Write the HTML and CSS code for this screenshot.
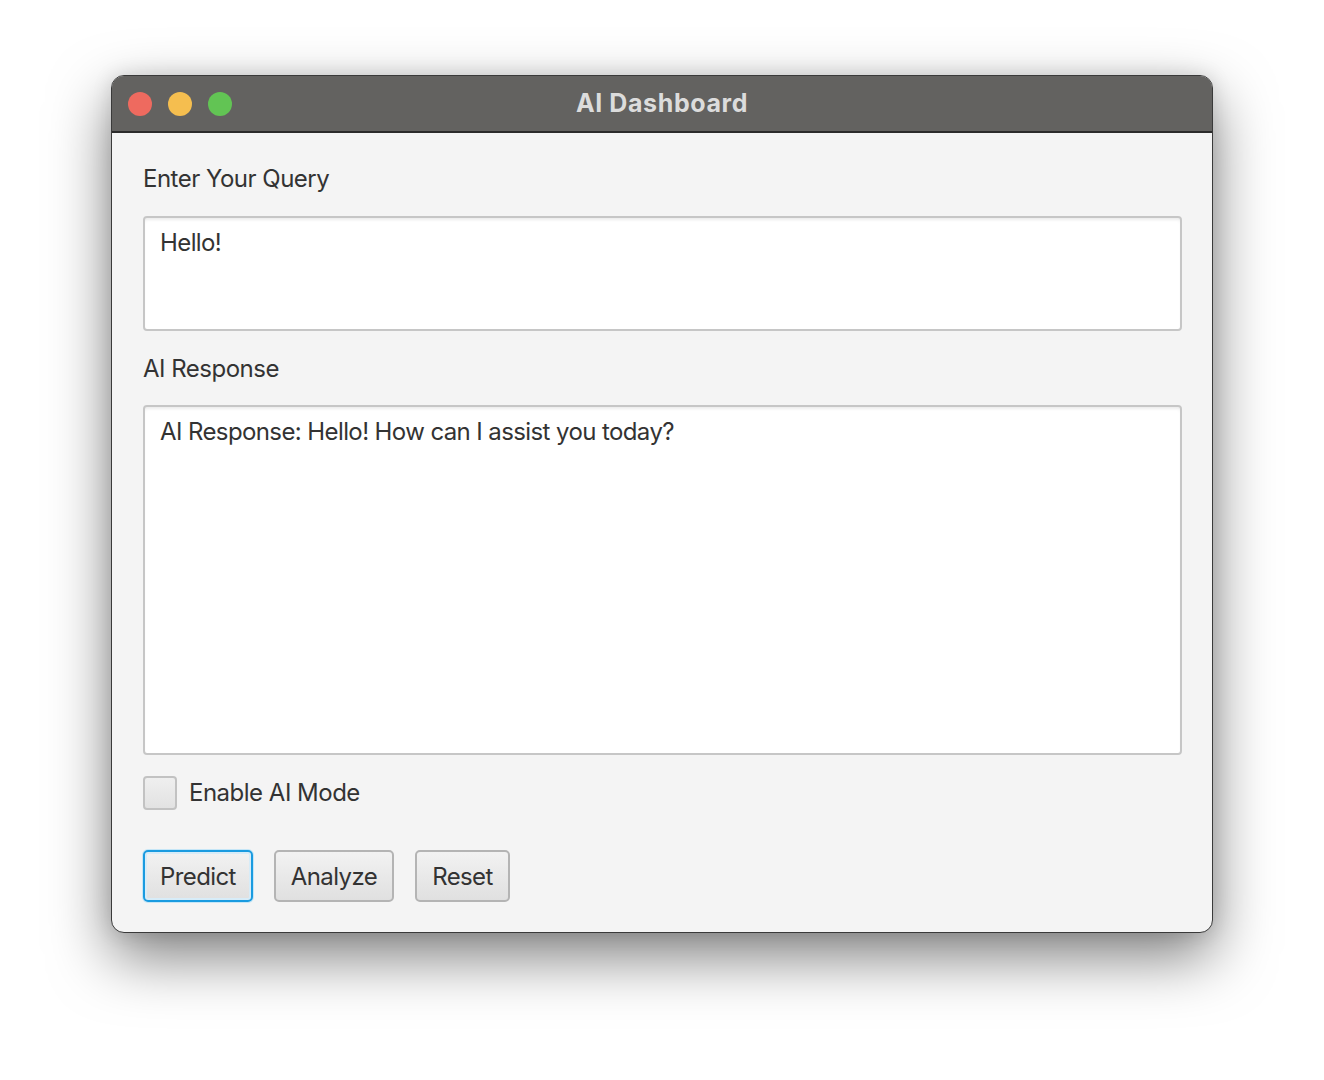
FILE: index.html
```html
<!DOCTYPE html>
<html>
<head>
<meta charset="utf-8">
<link rel="stylesheet" href="styles.css">
</head>
<body>
<div class="page">
  <div class="window">
    <div class="titlebar">
      <div class="lights">
        <span class="light red"></span>
        <span class="light yellow"></span>
        <span class="light green"></span>
      </div>
      <div class="title">AI Dashboard</div>
    </div>
    <div class="content">
      <div class="label first">Enter Your Query</div>
      <div class="textarea query"><span class="text">Hello!</span></div>
      <div class="label second">AI Response</div>
      <div class="textarea response"><span class="text">AI Response: Hello! How can I assist you today?</span></div>
      <div class="checkrow">
        <span class="checkbox"></span>
        <span class="checklabel">Enable AI Mode</span>
      </div>
      <div class="buttons">
        <button class="btn focused">Predict</button>
        <button class="btn">Analyze</button>
        <button class="btn">Reset</button>
      </div>
    </div>
  </div>
</div>
</body>
</html>
```
FILE: styles.css
```css
* { box-sizing: border-box; }
html, body {
  margin: 0;
  padding: 0;
  background: #ffffff;
  width: 1324px;
  height: 1080px;
  overflow: hidden;
}
.page {
  padding: 75px 0 0 111px;
}
.window {
  width: 1102px;
  height: 858px;
  border-radius: 13px;
  background: #f4f4f4;
  border: 1px solid #3a3a3a;
  box-shadow: 0 24px 60px rgba(0, 0, 0, 0.5), 0 0 20px rgba(0,0,0,0.12);
  overflow: hidden;
  display: flex;
  flex-direction: column;
  font-family: "Inter", "Noto Sans", sans-serif;
}
.titlebar {
  height: 57px;
  background: #636260;
  border-bottom: 2px solid #2b2b2b;
  display: flex;
  align-items: center;
  position: relative;
  flex-shrink: 0;
}
.lights {
  display: flex;
  gap: 16px;
  padding-left: 16px;
  padding-top: 1px;
}
.light {
  width: 24px;
  height: 24px;
  border-radius: 50%;
  display: block;
}
.red { background: #ee6a5f; }
.yellow { background: #f5be4f; }
.green { background: #62c454; }
.title {
  position: absolute;
  left: 0;
  right: 0;
  top: 0;
  bottom: 0;
  display: flex;
  align-items: center;
  justify-content: center;
  color: #dcdcdc;
  font-weight: 700;
  font-size: 25px;
  letter-spacing: 0.6px;
  padding-bottom: 1px;
}
.content {
  padding: 0 30px 0 31px;
  display: flex;
  flex-direction: column;
  color: #333333;
}
.label {
  font-size: 24px;
  height: 30px;
  line-height: 30px;
  margin-bottom: 22px;
  letter-spacing: -0.5px;
}
.label.first {
  margin-top: 31px;
}
.label.second {
  margin-top: 23px;
  margin-bottom: 21px;
}
.textarea {
  width: 1039px;
  background: #ffffff;
  border: 2px solid #c6c6c6;
  border-radius: 4px;
  box-shadow: inset 0 3px 3px -1px rgba(0,0,0,0.08);
  padding: 8px 15px;
  font-size: 24px;
  line-height: 34px;
  letter-spacing: -0.6px;
  color: #333333;
}
.textarea.query { height: 115px; }
.textarea.response { height: 350px; }
.checkrow {
  display: flex;
  align-items: center;
  margin-top: 20px;
  height: 35px;
}
.checkbox {
  width: 34px;
  height: 34px;
  border: 2px solid #c2c2c2;
  border-radius: 4px;
  background: linear-gradient(#efefef, #e2e2e2);
  display: block;
}
.checklabel {
  margin-left: 12px;
  font-size: 24px;
  letter-spacing: -0.5px;
  color: #333333;
}
.buttons {
  display: flex;
  gap: 21px;
  margin-top: 40px;
}
.btn {
  height: 52px;
  padding: 0 15px;
  font-family: "Inter", "Noto Sans", sans-serif;
  font-size: 24px;
  letter-spacing: -0.6px;
  color: #333333;
  background: linear-gradient(#f2f2f2, #e0e0e0);
  border: 2px solid #b4b4b4;
  border-radius: 5px;
}
.btn.focused {
  border: 2px solid #1a9be0;
  box-shadow: 0 0 0 1px #c5e6f7, inset 0 0 0 2px #d7ecf8;
}
```
